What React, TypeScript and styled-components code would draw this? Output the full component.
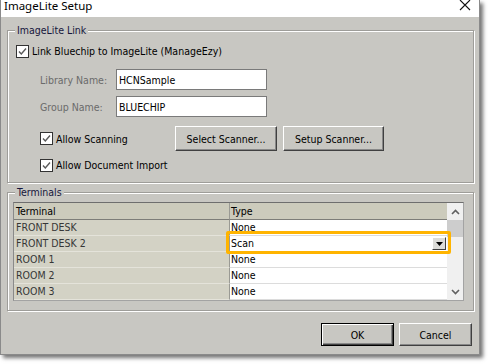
import styled, { createGlobalStyle } from 'styled-components';

const GlobalStyle = createGlobalStyle`
  html, body {
    margin: 0;
    padding: 0;
    background: #fff;
  }
  body {
    font-family: "DejaVu Sans Condensed", "Liberation Sans", sans-serif;
    font-size: 10.5px;
    color: #000;
  }
`;

const Screen = styled.div`
  width: 488px;
  height: 364px;
  background: #fff;
  overflow: hidden;
`;

const Window = styled.div`
  width: 478px;
  height: 354px;
  border: 1px solid #8a8a8a;
  border-top: none;
  background: #c8c7c2;
  box-shadow: 3px 3px 4px rgba(0, 0, 0, 0.55);
  display: flex;
  flex-direction: column;
`;

const TitleBar = styled.div`
  height: 17px;
  background: #fff;
  display: flex;
  justify-content: space-between;
  align-items: flex-start;
  padding-left: 3px;
  padding-right: 8px;
`;

const Title = styled.div`
  font-family: "Noto Sans", "Open Sans", sans-serif;
  font-size: 11.5px;
  line-height: 12px;
  color: #000;
`;

const Body = styled.div`
  flex: 1;
  display: flex;
  flex-direction: column;
  padding: 7px 5px 8px 6px;
`;

const Group = styled.fieldset<{ $gap?: number }>`
  margin: 0;
  margin-top: ${(p) => p.$gap ?? 0}px;
  padding: 0;
  border: 1px solid #9e9d99;
  box-shadow: inset 1px 1px 0 #fff, 1px 1px 0 #fff;
  min-width: 0;
`;

const Legend = styled.legend`
  margin-left: 7px;
  padding: 0 2px;
  line-height: 13px;
  background: #c8c7c2;
  color: #16163c;
`;

const LinkContent = styled.div`
  display: flex;
  flex-direction: column;
  padding: 8px 0 10px 8px;
`;

const CheckRow = styled.div<{ $indent?: number; $top?: number }>`
  display: flex;
  align-items: center;
  gap: 3px;
  height: 13px;
  margin-left: ${(p) => p.$indent ?? 0}px;
  margin-top: ${(p) => p.$top ?? 0}px;
  line-height: 13px;
`;

const FieldRow = styled.div<{ $top: number }>`
  display: flex;
  align-items: center;
  margin-left: 24px;
  margin-top: ${(p) => p.$top}px;
`;

const FieldLabel = styled.span`
  width: 76px;
  color: #6b6b6b;
`;

const TextInput = styled.div`
  box-sizing: border-box;
  width: 151px;
  height: 21px;
  border: 1px solid #7a7a7a;
  background: #fff;
  padding-left: 2px;
  display: flex;
  align-items: center;
`;

const ScanRow = styled.div`
  display: flex;
  align-items: center;
  margin-left: 24px;
  margin-top: 9px;
  height: 25px;
`;

const ScanCheck = styled.div`
  width: 135px;
  display: flex;
  align-items: center;
  gap: 3px;
`;

const ScanButtons = styled.div`
  display: flex;
  gap: 6px;
`;

const Button = styled.button<{ $w: number; $h: number; $default?: boolean }>`
  box-sizing: border-box;
  width: ${(p) => p.$w}px;
  height: ${(p) => p.$h}px;
  margin: 0;
  padding: 0;
  font: inherit;
  color: #000;
  background: #c8c7c2;
  border: 1px solid;
  border-color: ${(p) => (p.$default ? '#000' : '#fff #404040 #404040 #fff')};
  box-shadow: ${(p) =>
    p.$default
      ? 'inset 1px 1px 0 #fff, inset -1px -1px 0 #404040, inset -2px -2px 0 #888'
      : 'inset -1px -1px 0 #888'};
`;

const TermContent = styled.div`
  padding: 3px 0 9px 5px;
`;

const Table = styled.div`
  position: relative;
  box-sizing: border-box;
  width: 451px;
  height: 99px;
  border: 1px solid #a3a3a3;
  border-top-color: #6e6e6e;
  border-left-color: #8a8a8a;
  display: grid;
  grid-template-columns: 215px 218px 16px;
  grid-template-rows: 17px repeat(5, 16px);
  overflow: hidden;
`;

const HeadCell = styled.div<{ $split?: boolean }>`
  background: #cccbbc;
  border-bottom: 1px solid #7d7d78;
  border-left: ${(p) => (p.$split ? '1px solid #9a9a94' : 'none')};
  padding-left: ${(p) => (p.$split ? 1 : 2)}px;
  line-height: 16px;
`;

const TermCell = styled.div`
  background: #d3d2c5;
  color: #363636;
  padding-left: 2px;
  line-height: 15px;
  border-bottom: 1px solid #e4e3da;
`;

const TypeCell = styled.div`
  position: relative;
  background: #fff;
  border-left: 1px solid #9a9a94;
  border-bottom: 1px solid #dcdcdc;
  padding-left: 1px;
  line-height: 15px;
  display: flex;
  align-items: center;
  justify-content: space-between;
`;

const DropButton = styled.div`
  box-sizing: border-box;
  width: 14px;
  height: 13px;
  margin-right: 1px;
  background: #dcdcd8;
  border: 1px solid;
  border-color: #fff #404040 #404040 #fff;
  display: flex;
  align-items: center;
  justify-content: center;
`;

const Highlight = styled.div`
  position: absolute;
  z-index: 2;
  left: -4px;
  right: -4px;
  top: -5px;
  bottom: -3px;
  border: 3px solid #ffb400;
  border-radius: 2px;
  pointer-events: none;
`;

const ScrollBar = styled.div`
  grid-column: 3;
  grid-row: 1 / span 6;
  background: #f0f0f0;
  display: flex;
  flex-direction: column;
`;

const ScrollArrow = styled.div`
  height: 17px;
  display: flex;
  align-items: center;
  justify-content: center;
`;

const ScrollTrack = styled.div`
  flex: 1;
`;

const Thumb = styled.div`
  height: 17px;
  background: #cdcdcd;
`;

const Footer = styled.div`
  display: flex;
  justify-content: flex-end;
  gap: 5px;
  margin-top: 12px;
  padding-right: 2px;
`;

const CheckBox = () => (
  <svg width="13" height="13" viewBox="0 0 13 13">
    <rect x="0.5" y="0.5" width="12" height="12" fill="#fff" stroke="#333" />
    <path d="M3 6.5 L5.3 9 L10 3.5" fill="none" stroke="#5a5a5a" strokeWidth="1.4" />
  </svg>
);

const Chevron = ({ up }: { up?: boolean }) => (
  <svg width="9" height="6" viewBox="0 0 9 6">
    <path
      d={up ? 'M1 5 L4.5 1.5 L8 5' : 'M1 1 L4.5 4.5 L8 1'}
      fill="none"
      stroke="#606060"
      strokeWidth="1.6"
    />
  </svg>
);

const rows = [
  { name: 'FRONT DESK', type: 'None' },
  { name: 'FRONT DESK 2', type: 'Scan', active: true },
  { name: 'ROOM 1', type: 'None' },
  { name: 'ROOM 2', type: 'None' },
  { name: 'ROOM 3', type: 'None' },
];

const App = () => {
  return (
    <Screen>
      <GlobalStyle />
      <Window>
        <TitleBar>
          <Title>ImageLite Setup</Title>
          <svg width="12" height="11" viewBox="0 0 12 11">
            <path d="M1 0 L11 10 M11 0 L1 10" stroke="#111" strokeWidth="1.1" />
          </svg>
        </TitleBar>

        <Body>
          <Group>
            <Legend>ImageLite Link</Legend>
            <LinkContent>
              <CheckRow>
                <CheckBox />
                <span>Link Bluechip to ImageLite (ManageEzy)</span>
              </CheckRow>
              <FieldRow $top={11}>
                <FieldLabel>Library Name:</FieldLabel>
                <TextInput>HCNSample</TextInput>
              </FieldRow>
              <FieldRow $top={6}>
                <FieldLabel>Group Name:</FieldLabel>
                <TextInput>BLUECHIP</TextInput>
              </FieldRow>
              <ScanRow>
                <ScanCheck>
                  <CheckBox />
                  <span>Allow Scanning</span>
                </ScanCheck>
                <ScanButtons>
                  <Button $w={102} $h={25}>Select Scanner...</Button>
                  <Button $w={101} $h={25}>Setup Scanner...</Button>
                </ScanButtons>
              </ScanRow>
              <CheckRow $indent={24} $top={8}>
                <CheckBox />
                <span>Allow Document Import</span>
              </CheckRow>
            </LinkContent>
          </Group>

          <Group $gap={3}>
            <Legend>Terminals</Legend>
            <TermContent>
              <Table>
                <HeadCell>Terminal</HeadCell>
                <HeadCell $split>Type</HeadCell>
                <ScrollBar>
                  <ScrollArrow>
                    <Chevron up />
                  </ScrollArrow>
                  <ScrollTrack>
                    <Thumb />
                  </ScrollTrack>
                  <ScrollArrow>
                    <Chevron />
                  </ScrollArrow>
                </ScrollBar>
                {rows.map((r) => (
                  <>
                    <TermCell key={r.name}>{r.name}</TermCell>
                    <TypeCell key={r.name + '-t'}>
                      <span>{r.type}</span>
                      {r.active && (
                        <>
                          <DropButton>
                            <svg width="7" height="4" viewBox="0 0 7 4">
                              <path d="M0 0 H7 L3.5 4 Z" fill="#000" />
                            </svg>
                          </DropButton>
                          <Highlight />
                        </>
                      )}
                    </TypeCell>
                  </>
                ))}
              </Table>
            </TermContent>
          </Group>

          <Footer>
            <Button $w={73} $h={23} $default>OK</Button>
            <Button $w={73} $h={23}>Cancel</Button>
          </Footer>
        </Body>
      </Window>
    </Screen>
  );
};

export default App;
